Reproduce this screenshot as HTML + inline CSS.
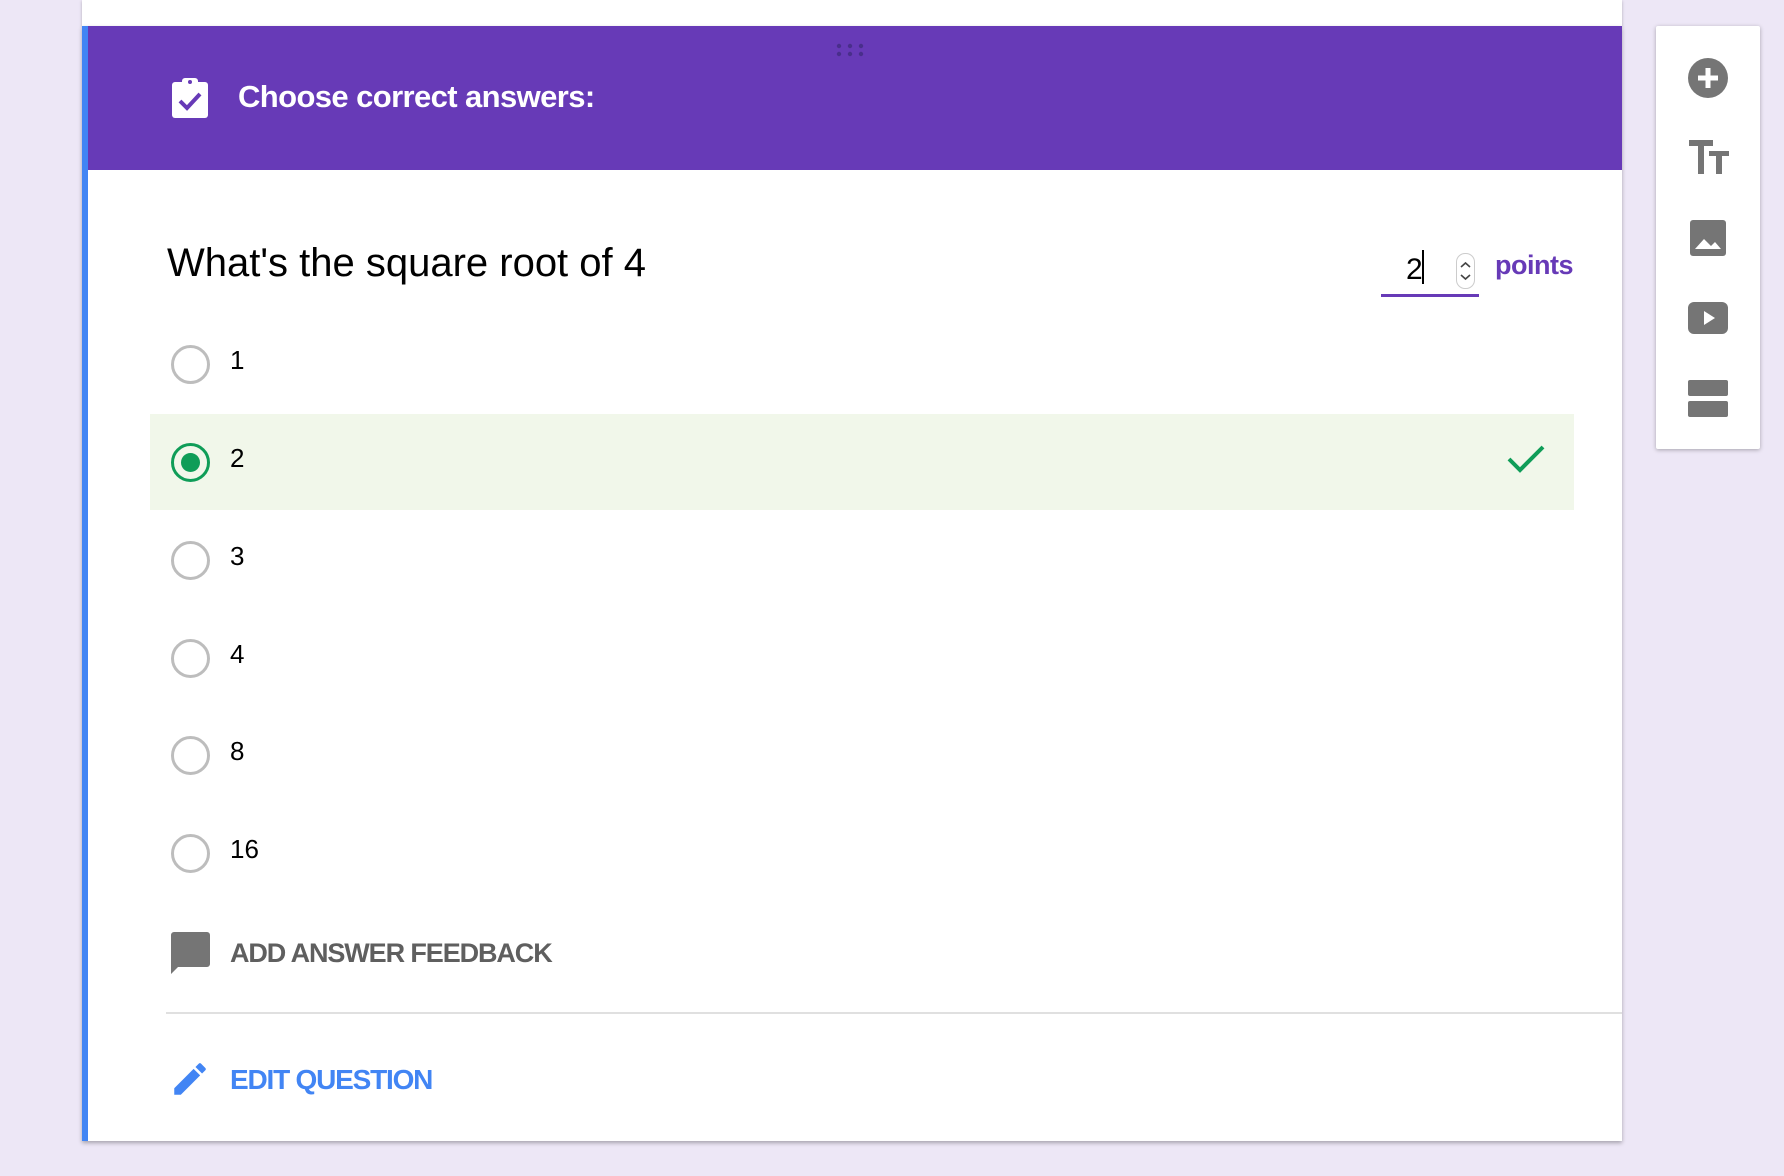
<!DOCTYPE html>
<html><head><meta charset="utf-8"><style>
*{margin:0;padding:0;box-sizing:border-box}
html,body{width:1784px;height:1176px;overflow:hidden;background:#ede7f6;font-family:"Liberation Sans",sans-serif;position:relative}
.abs{position:absolute}
.top{left:82px;top:0;width:1540px;height:26px;background:#fff;box-shadow:0 1px 3px rgba(0,0,0,.25)}
.card{left:82px;top:26px;width:1540px;height:1115px;background:#fff;box-shadow:0 2px 4px rgba(0,0,0,.3);border-left:6px solid #4285f4}
.hdr{left:88px;top:26px;width:1534px;height:144px;background:#673ab7}
.title{left:238px;top:79px;font-size:31px;font-weight:bold;color:#fff;letter-spacing:-0.6px}
.q{left:167px;top:241px;font-size:40px;color:#000;letter-spacing:0px}
.radio{width:39px;height:39px;border:3px solid #bdbdbd;border-radius:50%;left:171px}
.lbl{left:230px;font-size:26px;color:#000}
.hl{left:150px;top:414px;width:1424px;height:96px;background:#f1f7ea}
.side{left:1656px;top:26px;width:104px;height:423px;background:#fff;border-radius:2px;box-shadow:0 1px 4px rgba(0,0,0,.3)}
</style></head><body>
<div class="abs top"></div>
<div class="abs card"></div>
<div class="abs hdr"></div>
<svg class="abs" style="left:836px;top:43px" width="34" height="14"><g fill="#3d2a7a" opacity=".7"><circle cx="3" cy="3" r="2.2"/><circle cx="14" cy="3" r="2.2"/><circle cx="25" cy="3" r="2.2"/><circle cx="3" cy="11" r="2.2"/><circle cx="14" cy="11" r="2.2"/><circle cx="25" cy="11" r="2.2"/></g></svg>
<svg class="abs" style="left:171px;top:76px" width="38" height="42" viewBox="0 0 38 42"><rect x="1" y="6" width="36" height="36" rx="3" fill="#fff"/><rect x="11" y="2" width="16" height="8" rx="3" fill="#fff"/><circle cx="19" cy="6" r="2" fill="#673ab7"/><path d="M9 25l7 7 13-14" stroke="#673ab7" stroke-width="4" fill="none"/></svg>
<div class="abs title">Choose correct answers:</div>
<div class="abs q">What's the square root of 4</div>
<div class="abs" style="left:1381px;top:294px;width:98px;height:3px;background:#673ab7"></div>
<div class="abs" style="left:1406px;top:253px;font-size:30px;color:#000">2</div>
<div class="abs" style="left:1422px;top:250px;width:2px;height:34px;background:#000"></div>
<div class="abs" style="left:1456px;top:253px;width:19px;height:36px;border:1px solid #ccc;border-radius:9px"></div>
<svg class="abs" style="left:1458px;top:257px" width="15" height="28"><path d="M3 10l4.5-4 4.5 4M3 18l4.5 4 4.5-4" stroke="#444" stroke-width="1.6" fill="none"/></svg>
<div class="abs" style="left:1495px;top:250px;font-size:27px;font-weight:bold;color:#673ab7;letter-spacing:-0.5px">points</div>
<div class="abs hl"></div>
<div class="abs radio" style="top:345px"></div><div class="abs lbl" style="top:345px">1</div>
<div class="abs radio" style="top:443px;border-color:#0f9d58"></div><div class="abs" style="left:181px;top:453px;width:19px;height:19px;border-radius:50%;background:#0f9d58"></div><div class="abs lbl" style="top:443px">2</div>
<div class="abs radio" style="top:541px"></div><div class="abs lbl" style="top:541px">3</div>
<div class="abs radio" style="top:639px"></div><div class="abs lbl" style="top:639px">4</div>
<div class="abs radio" style="top:736px"></div><div class="abs lbl" style="top:736px">8</div>
<div class="abs radio" style="top:834px"></div><div class="abs lbl" style="top:834px">16</div>
<svg class="abs" style="left:1506px;top:444px" width="40" height="30"><path d="M3 15l11 11L37 3" stroke="#0f9d58" stroke-width="4" fill="none"/></svg>
<svg class="abs" style="left:168px;top:932px" width="42" height="42" viewBox="0 0 42 42"><path d="M3 0h36a3 3 0 0 1 3 3v29a3 3 0 0 1-3 3H10l-7 7V3a3 3 0 0 1 3-3z" fill="#757575"/></svg>
<div class="abs" style="left:230px;top:938px;font-size:27px;font-weight:bold;color:#5f5f5f;letter-spacing:-1.1px">ADD ANSWER FEEDBACK</div>
<div class="abs" style="left:166px;top:1012px;width:1456px;height:2px;background:#e0e0e0"></div>
<svg class="abs" style="left:169px;top:1058px" width="42" height="42" viewBox="0 0 24 24"><path d="M3 17.25V21h3.75L17.81 9.94l-3.75-3.75L3 17.25zM20.71 7.04a1 1 0 0 0 0-1.41l-2.34-2.34a1 1 0 0 0-1.41 0l-1.83 1.83 3.75 3.75 1.83-1.83z" fill="#4285f4"/></svg>
<div class="abs" style="left:230px;top:1064px;font-size:28px;font-weight:bold;color:#4285f4;letter-spacing:-1.2px">EDIT QUESTION</div>
<div class="abs side"></div>
<svg class="abs" style="left:1688px;top:58px" width="40" height="40"><circle cx="20" cy="20" r="20" fill="#757575"/><path d="M20 10v20M10 20h20" stroke="#fff" stroke-width="5"/></svg>
<svg class="abs" style="left:1689px;top:140px" width="40" height="34"><path d="M0 0h24v6h-9v28h-6V6H0zM20 11h20v5h-7v18h-6V16h-7z" fill="#757575"/></svg>
<svg class="abs" style="left:1690px;top:220px" width="36" height="36"><rect width="36" height="36" rx="3" fill="#757575"/><path d="M5 29l9-10 7 7 4-4 6 7z" fill="#fff"/></svg>
<svg class="abs" style="left:1688px;top:302px" width="40" height="32"><rect width="40" height="32" rx="6" fill="#757575"/><path d="M16 9v14l11-7z" fill="#fff"/></svg>
<svg class="abs" style="left:1688px;top:380px" width="40" height="37"><rect width="40" height="16" rx="2" fill="#757575"/><rect y="21" width="40" height="16" rx="2" fill="#757575"/></svg>
</body></html>
